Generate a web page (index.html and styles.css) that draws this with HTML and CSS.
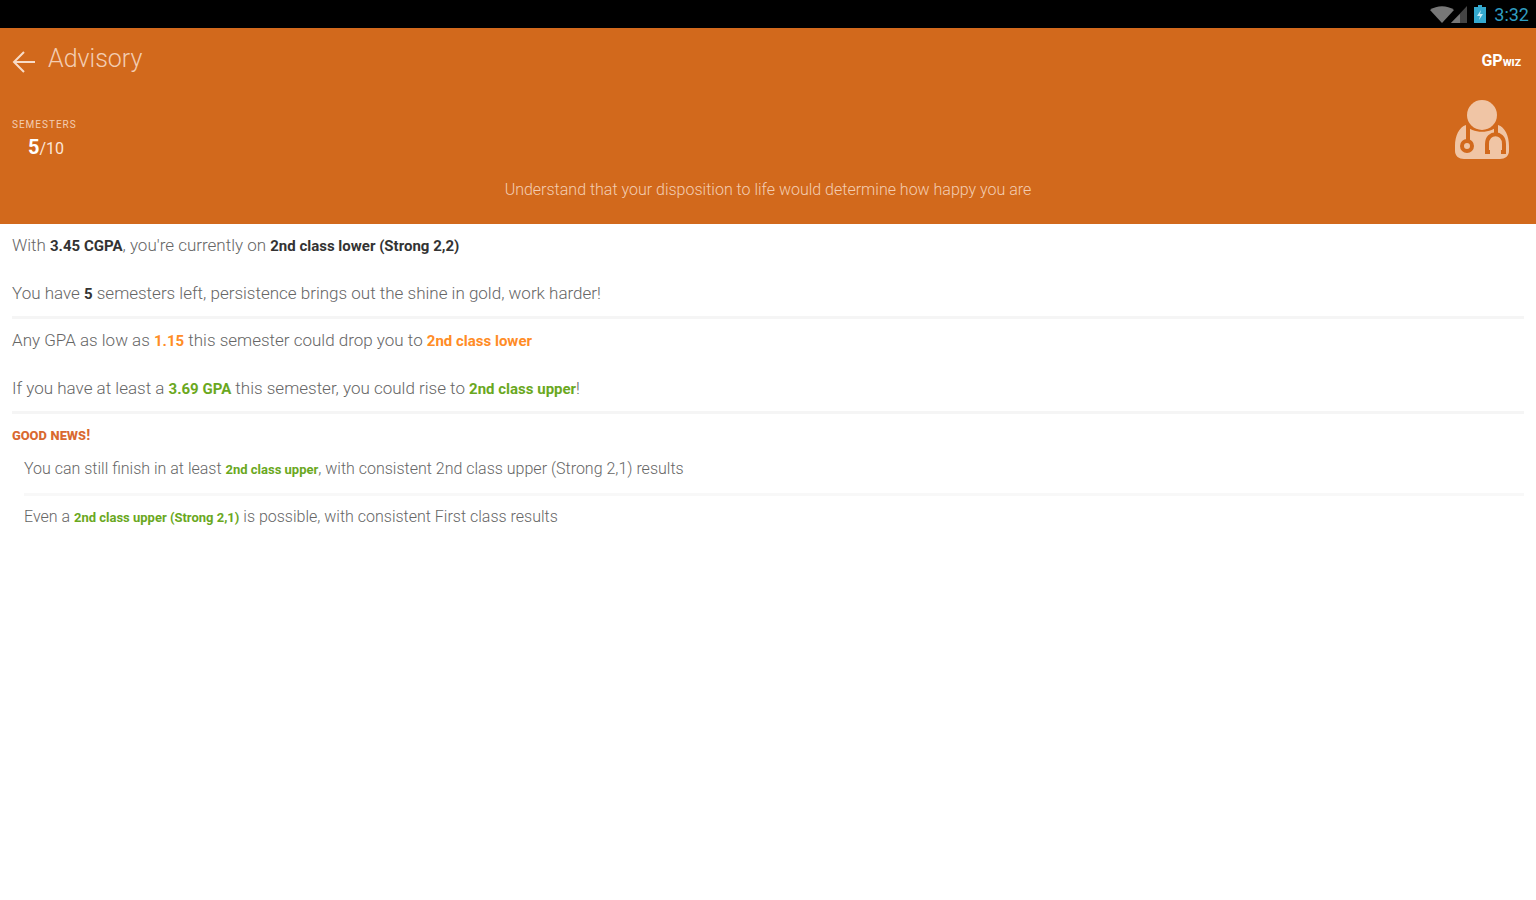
FILE: index.html
```html
<!DOCTYPE html>
<html lang="en">
<head>
    <meta charset="UTF-8">
    <meta name="viewport" content="width=device-width, initial-scale=1.0">
    <title>Advisory</title>
    <link rel="stylesheet" href="styles.css">
</head>
<body>
    <div class="status-bar">
        <svg class="signals" viewBox="0 0 38 18" width="38" height="18" aria-hidden="true">
            <path d="M0 5C7 0 17 0 24 5L12 18Z" fill="#777"/>
            <path d="M37 1V18H21Z" fill="#444"/>
            <path d="M30 9V18H21Z" fill="#777"/>
        </svg>
        <svg class="battery" viewBox="0 0 12 18" width="12" height="18" aria-hidden="true">
            <path d="M4 0H8V2H12V18H0V2H4Z" fill="#34a9cf"/>
            <path d="M7 5L3 11H6L5 15L9 9H6Z" fill="#c5eef9"/>
        </svg>
        <time>3:32</time>
    </div>

    <header>
        <div class="toolbar">
            <a class="back" href="#" aria-label="Back">
                <svg viewBox="0 0 24 24" width="24" height="24">
                    <path d="M23 12H2M12 2L2 12L12 22" fill="none" stroke="currentColor" stroke-width="2"/>
                </svg>
            </a>
            <h1>Advisory</h1>
            <span class="brand">GP<span>wiz</span></span>
        </div>
        <div class="summary">
            <div class="semesters">
                <h2>SEMESTERS</h2>
                <p><strong>5</strong>/10</p>
            </div>
            <svg class="advisor" viewBox="0 0 56 62" width="56" height="62" aria-hidden="true">
                <circle cx="28" cy="16" r="15" fill="#f0c5a5"/>
                <path d="M12 26C17 35 39 35 44 26C51 28 55 37 55 47V52C55 57 51 60 46 60H10C5 60 1 57 1 52V47C1 37 5 28 12 26Z" fill="#f0c5a5"/>
                <g fill="none" stroke="#d2691c" stroke-width="4">
                    <path d="M14 26V42M42 26V35"/>
                    <circle cx="13" cy="47" r="5"/>
                    <path d="M36 53H33V45C33 32 50 32 50 45V53H47"/>
                </g>
            </svg>
        </div>
        <p class="quote">Understand that your disposition to life would determine how happy you are</p>
    </header>

    <main>
        <section>
            <p>With <b>3.45 CGPA</b>, you're currently on <b>2nd class lower (Strong 2,2)</b></p>
            <p>You have <b>5</b> semesters left, persistence brings out the shine in gold, work harder!</p>
        </section>
        <section>
            <p>Any GPA as low as <b class="warn">1.15</b> this semester could drop you to <b class="warn">2nd class lower</b></p>
            <p>If you have at least a <b class="good">3.69 GPA</b> this semester, you could rise to <b class="good">2nd class upper</b>!</p>
        </section>
        <section class="news">
            <h3>good news!</h3>
            <ul>
                <li>You can still finish in at least <b class="good">2nd class upper</b>, with consistent 2nd class upper (Strong 2,1) results</li>
                <li>Even a <b class="good">2nd class upper (Strong 2,1)</b> is possible, with consistent First class results</li>
            </ul>
        </section>
    </main>
</body>
</html>
```
FILE: styles.css
```css
body {
    font-family: Roboto, 'Liberation Sans', sans-serif;
    font-size: 16px;
    margin: 0;
    background-color: #fff;
    color: #666;
}

h1, h2, h3, p, ul {
    margin: 0;
    padding: 0;
}

.status-bar {
    display: flex;
    align-items: center;
    justify-content: flex-end;
    height: 28px;
    padding: 0 7px;
    background-color: #000;
    color: #2f9dc1;
}

.battery {
    margin: 0 8px 0 6px;
}

.status-bar time {
    font-size: 18px;
}

header {
    padding: 12px 12px 24px;
    background-color: #d2691c;
    color: #f3cdb2;
}

.toolbar {
    display: flex;
    align-items: center;
    height: 40px;
    gap: 12px;
}

.back {
    display: flex;
    padding-top: 4px;
    color: #f8dcc8;
}

h1 {
    flex: 1;
    padding-bottom: 4px;
    font-size: 25px;
    font-weight: 300;
}

.brand {
    padding-right: 3px;
    font-size: 16px;
    font-weight: 700;
    color: #fff;
}

.brand span {
    font-variant: small-caps;
    font-size: 12px;
}

.summary {
    display: flex;
    align-items: center;
    justify-content: space-between;
    padding: 17px 14px 0 0;
}

.semesters {
    padding-top: 20px;
}

h2 {
    font-size: 10px;
    font-weight: 400;
    letter-spacing: 1px;
    line-height: 16px;
}

.semesters p {
    padding-left: 16px;
    line-height: 28px;
    color: #fbe6d8;
}

.semesters strong {
    font-size: 20px;
    color: #fff;
}

.quote {
    padding-top: 17px;
    text-align: center;
    font-weight: 300;
    line-height: 20px;
}

main {
    padding: 0 12px;
}

section {
    display: flex;
    flex-direction: column;
    gap: 28px;
    padding: 11px 0 13px;
    border-bottom: 3px solid #f5f5f5;
}

section p {
    font-size: 17px;
    font-weight: 300;
    line-height: 20px;
}

b {
    font-size: 15px;
    font-weight: 700;
    line-height: 1;
    color: #333;
}

.warn {
    color: #ff8c26;
}

.good {
    color: #6aa81e;
}

.news {
    gap: 0;
    border-bottom: none;
}

h3 {
    font-size: 15px;
    font-variant: small-caps;
    line-height: 20px;
    color: #d9692f;
}

ul {
    list-style: none;
    padding-left: 12px;
}

li {
    padding: 14px 0;
    line-height: 20px;
    font-weight: 300;
}

li + li {
    padding-top: 11px;
    border-top: 3px solid #f8f8f8;
}

li b {
    font-size: 13px;
}
```
